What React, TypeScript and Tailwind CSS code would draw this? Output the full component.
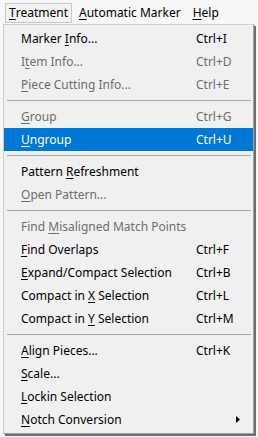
import React from "react";

type Item =
  | { sep: true }
  | { label: string; key?: string; disabled?: boolean; active?: boolean; sub?: boolean; sep?: false };

const ITEMS: Item[] = [
  { label: "Marker &Info...", key: "Ctrl+I" },
  { label: "I&tem Info...", key: "Ctrl+D", disabled: true },
  { label: "&Piece Cutting Info...", key: "Ctrl+E", disabled: true },
  { sep: true },
  { label: "&Group", key: "Ctrl+G", disabled: true },
  { label: "&Ungroup", key: "Ctrl+U", active: true },
  { sep: true },
  { label: "Pattern &Refreshment" },
  { label: "&Open Pattern...", disabled: true },
  { sep: true },
  { label: "Find &Misaligned Match Points", disabled: true },
  { label: "&Find Overlaps", key: "Ctrl+F" },
  { label: "&Expand/Compact Selection", key: "Ctrl+B" },
  { label: "Compact in &X Selection", key: "Ctrl+L" },
  { label: "Compact in &Y Selection", key: "Ctrl+M" },
  { sep: true },
  { label: "&Align Pieces...", key: "Ctrl+K" },
  { label: "&Scale..." },
  { label: "&Lockin Selection" },
  { label: "&Notch Conversion", sub: true },
];

// "&" marks the mnemonic letter, like a Win32 resource string
const Mnemonic: React.FC<{ text: string }> = ({ text }) => {
  const i = text.indexOf("&");
  if (i < 0) return <>{text}</>;
  return (
    <>
      {text.slice(0, i)}
      <span className="underline underline-offset-[2px] decoration-1">{text[i + 1]}</span>
      {text.slice(i + 2)}
    </>
  );
};

const App: React.FC = () => {
  return (
    <div
      className="w-[258px] h-[437px] bg-[#f7f7f7] text-[12px] leading-none text-black overflow-hidden"
      style={{ fontFamily: '"Noto Sans", "Liberation Sans", sans-serif' }}
    >
      {/* menu bar */}
      <div className="h-[24px] flex items-start pt-[3px] bg-[#f7f7f7]">
        <div className="ml-[5px] h-[20px] flex items-center px-[3px] border border-[#c8c8c8] bg-[#f2f2f2]">
          <Mnemonic text="&Treatment" />
        </div>
        <div className="ml-[7px] h-[20px] flex items-center">
          <Mnemonic text="&Automatic Marker" />
        </div>
        <div className="ml-[12px] h-[20px] flex items-center">
          <Mnemonic text="&Help" />
        </div>
      </div>

      {/* dropdown */}
      <div className="ml-[3px] w-[251px] flex flex-col py-[2px] bg-[#f0f0f0] border border-[#cccccc] border-r-[#a0a0a0] border-b-[#a0a0a0] shadow-[2px_2px_0_#6e6e6e]">
        {ITEMS.map((it, i) =>
          it.sep ? (
            <div key={i} className="h-[9px] pt-[4px] pl-[3px] pr-[2px]">
              <div className="h-px bg-[#a8a8a8]" />
            </div>
          ) : (
            <div
              key={i}
              className={`h-[23px] flex items-center pl-[17px] ${
                it.active ? "bg-[#0078d7] text-white" : it.disabled ? "text-[#6d6d6d]" : ""
              }`}
            >
              <span className="w-[175px] whitespace-nowrap">
                <Mnemonic text={it.label} />
              </span>
              <span className="whitespace-nowrap">{it.key}</span>
              {it.sub && (
                <svg className="ml-[40px]" width="4" height="7" viewBox="0 0 4 7">
                  <path d="M0 0 L4 3.5 L0 7 Z" fill="#000" />
                </svg>
              )}
            </div>
          )
        )}
      </div>
    </div>
  );
};

export default App;
